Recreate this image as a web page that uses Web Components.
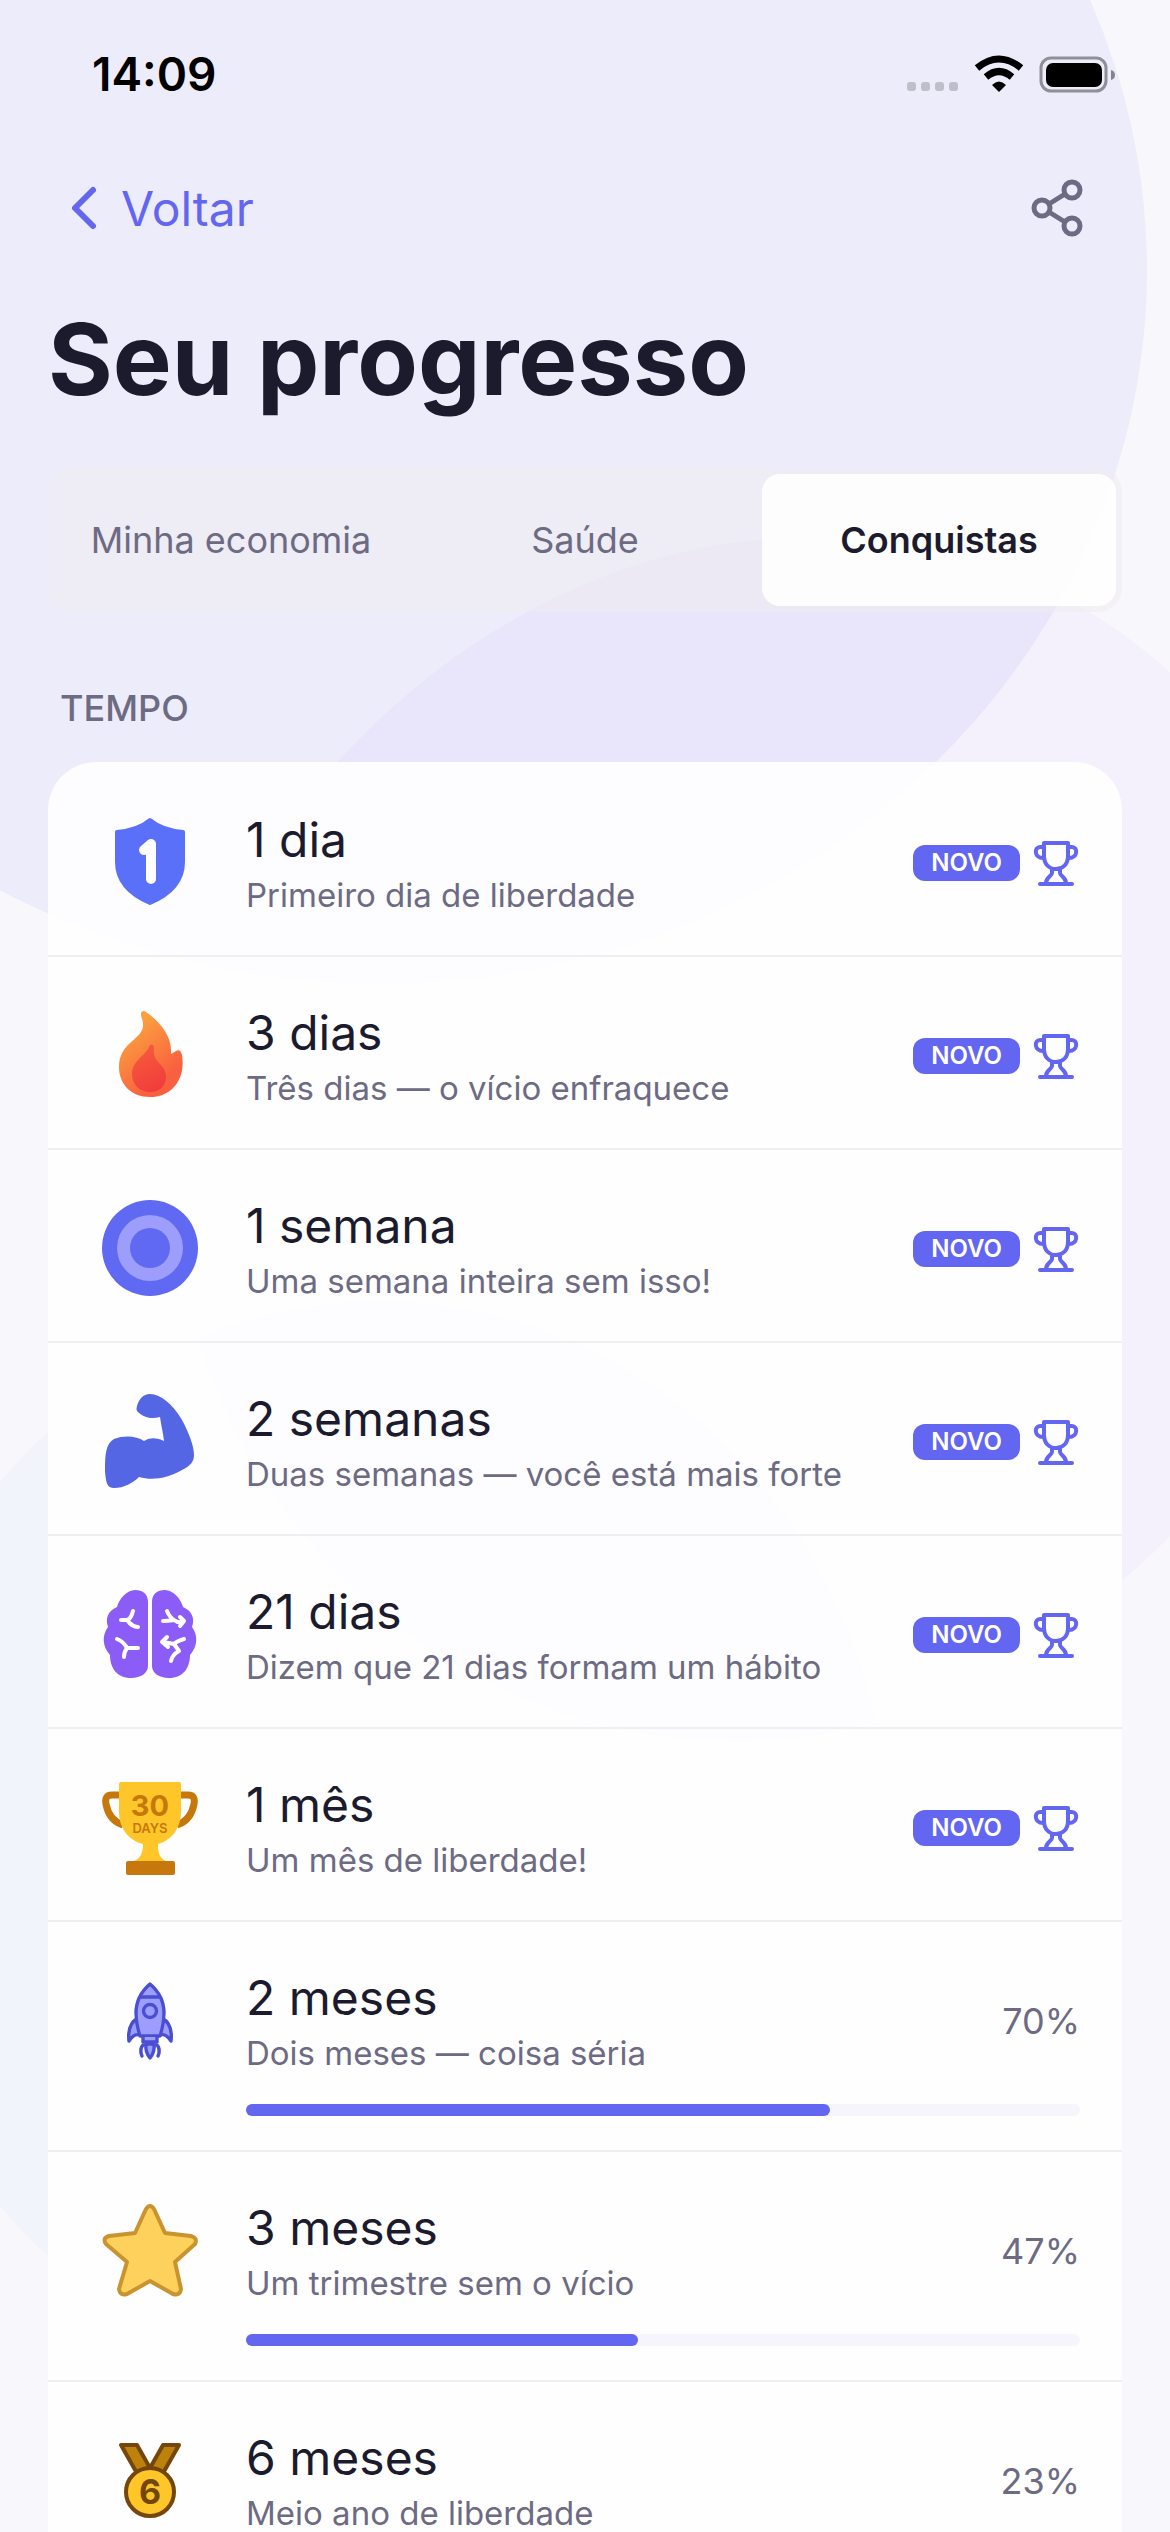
<!DOCTYPE html>
<html lang="pt">
<head>
<meta charset="utf-8">
<meta name="viewport" content="width=device-width, initial-scale=1">
<title>Seu progresso</title>
<style>
    html {
        overflow-x: hidden;
    }

    body {
        margin: 0;
        font-family: Inter, 'Open Sans', sans-serif;
        color: #1c1b2e;
        background: #f8f7fc;
        --accent: #6366f1;
        --muted: #6d6b83;
        --line: #efeff1;
    }
</style>
</head>
<body>
<progress-page></progress-page>

<script>
const icons = {
    shield: `<path fill="#5a70f8" stroke="#5a70f8" stroke-width="4" stroke-linejoin="round" d="M48 6Q36 16 15 18V48C15 67 27 80 48 89C69 80 81 67 81 48V18Q60 16 48 6Z"/>
        <path fill="none" stroke="#fff" stroke-width="10" stroke-linecap="round" stroke-linejoin="round" d="M42 36L49 30V65"/>`,
    flame: `<defs>
            <linearGradient id="fire" x1="0.2" y1="0" x2="0.8" y2="1"><stop offset="0.15" stop-color="#fb9f3f"/><stop offset="0.8" stop-color="#f9603f"/></linearGradient>
            <linearGradient id="core" x1="0.3" y1="0" x2="0.7" y2="1"><stop offset="0" stop-color="#f75c3c"/><stop offset="1" stop-color="#f03c3c"/></linearGradient>
        </defs>
        <path fill="url(#fire)" d="M39 7C39 4 42 3 44 5C57 14 69 28 69 43V47L74 44C77 42 79 44 80 48C84 73 69 90 48 90C29 90 17 77 17 60C17 34 42 33 41 17C41 13 39 11 39 7Z"/>
        <path fill="url(#core)" d="M47 40C48 36 52 37 52 41C50 57 64 56 64 70C64 79 57 85 48 85C37 85 30 77 30 67C30 54 43 49 47 40Z"/>`,
    target: `<circle cx="48" cy="48" r="48" fill="#6069f2"/><circle cx="48" cy="48" r="33" fill="#9c9dfc"/><circle cx="48" cy="48" r="20" fill="#6069f2"/>`,
    arm: `<path fill="#5566e5" d="M35 13C37 6 41 1 48 1C58 1 71 11 80 27C87 40 92 53 92 62C92 69 88 73 80 77C66 85 51 88 37 84C31 90 22 95 12 95C5 95 4 90 3 78C3 60 4 51 12 46C22 42 35 43 42 48C49 44 55 45 62 48C61 39 59 32 58 24C47 27 40 23 35 18Q34 16 35 13Z"/>`,
    brain: `<path fill="#8b5cf6" d="M46 16C46 8 41 4 33 4C25 4 17 13 15 21C6 25 3 32 6 41C0 49 0 60 8 69C8 82 15 92 29 92C39 92 46 87 46 80ZM50 16C50 8 55 4 63 4C71 4 79 13 81 21C90 25 93 32 90 41C96 49 96 60 88 69C88 82 81 92 67 92C57 92 50 87 50 80Z"/>
        <g fill="none" stroke="#fff" stroke-width="4" stroke-linecap="round" stroke-linejoin="round">
            <path d="M31 25Q29 33 25 34H19M25 34Q30 41 36 41M15 53Q22 56 25 62H36M25 62Q22 66 22 71"/>
            <path d="M65 25Q68 32 72 34Q66 35 61 35M72 34Q77 38 82 35M78 31L82 35L78 40M82 53Q75 55 72 58L61 56M65 51L60 56L66 61M72 58L77 65Q70 69 69 75"/>
        </g>`,
    cup: `<path fill="none" stroke="#c6780c" stroke-width="7" d="M20 16H10C4 16 3 20 4 25C6 36 12 43 21 46M76 16H86C92 16 93 20 92 25C90 36 84 43 75 46"/>
        <path fill="#fec629" d="M19 3H77Q79 3 79 5V32C79 49 70 61 56 65C56 73 57 79 64 82H32C39 79 41 73 41 65C26 61 17 49 17 32V5Q17 3 19 3Z"/>
        <rect x="24" y="82" width="49" height="14" rx="2" fill="#c6780c"/>
        <text x="48" y="37" text-anchor="middle" fill="#c6780c" font-size="29" font-weight="700">30</text>
        <text x="48" y="54" text-anchor="middle" fill="#c6780c" font-size="13" font-weight="600">DAYS</text>`,
    rocket: `<g fill="#9c9dfc" stroke="#4a4fd2" stroke-width="3.4" stroke-linejoin="round" stroke-linecap="round">
            <path d="M36 46Q25 52 27 69Q32 61 38 63M60 46Q71 52 69 69Q64 61 58 63"/>
            <path d="M48 12Q34 24 34 41Q34 52 38 64H58Q62 52 62 41Q62 24 48 12Z"/>
            <path d="M39 25H57M41 65V70H55V65"/><path d="M44 72Q43 80 48 86Q53 80 52 72ZM41 73Q37 77 40 84M55 73Q59 77 56 84"/>
            <circle cx="48" cy="39" r="6.5"/>
        </g>`,
    star: `<path fill="#fdd15b" stroke="#c99430" stroke-width="4" stroke-linejoin="round" d="M44 7Q48 1 52 7L63 31L89 34Q96 36 93 42L73 60L79 87Q78 94 71 92L48 79L25 92Q18 94 17 87L25 60L4 42Q0 36 7 34L33 31Z"/>`,
    medal: `<g stroke="#744608" stroke-width="4" stroke-linejoin="round">
            <path fill="#bd820c" d="M19 13H35L48 36L61 13H77L60 43H36Z"/>
            <circle cx="48" cy="60" r="24" fill="#fec629"/>
        </g>
        <text x="48" y="72" text-anchor="middle" fill="#744608" font-size="34" font-weight="700">6</text>`
};

class PageBackdrop extends HTMLElement {
    constructor() {
        super();

        this.attachShadow({ mode: 'open' });
        this.shadowRoot.innerHTML = `
            <style>
                :host {
                    position: absolute;
                    inset: 0;
                    z-index: -1;
                    overflow: hidden;
                }

                svg {
                    display: block;
                    width: 100%;
                    height: auto;
                }
            </style>
            <svg viewBox="0 0 1170 2532" aria-hidden="true">
                <ellipse cx="380" cy="270" rx="767" ry="714" fill="#6366f1" fill-opacity="0.07"/>
                <path d="M803 538C970 538 1090 595 1180 682V1526C1060 1650 900 1742 740 1742C420 1742 170 1480 170 1160C170 850 480 538 803 538Z" fill="#8b5cf6" fill-opacity="0.035"/>
                <ellipse cx="380" cy="1844" rx="510" ry="543" fill="#3ba9e8" fill-opacity="0.03"/>
            </svg>
        `;
    }
}

class StatusBar extends HTMLElement {
    constructor() {
        super();

        this.attachShadow({ mode: 'open' });
        this.shadowRoot.innerHTML = `
            <style>
                :host {
                    display: flex;
                    justify-content: space-between;
                    align-items: center;
                    height: 148px;
                    padding: 0 54px 0 92px;
                    color: #000;
                    font-size: 46px;
                    font-weight: 600;
                }
            </style>
            <span>14:09</span>
            <svg width="210" height="40" viewBox="0 0 210 40" aria-hidden="true">
                <g fill="#bfbec9"><rect x="1" y="28" width="9" height="9" rx="3"/><rect x="15" y="28" width="9" height="9" rx="3"/><rect x="29" y="28" width="9" height="9" rx="3"/><rect x="43" y="28" width="9" height="9" rx="3"/></g>
                <g fill="none" stroke="#000" stroke-width="7"><path d="M71 14Q93-4 115 14"/><path d="M80 23Q93 12 106 23"/></g>
                <path d="M86 31Q93 24 100 31L93 38Z"/>
                <rect x="135" y="4" width="65" height="33" rx="10" fill="none" stroke="#908f98" stroke-width="3"/>
                <rect x="140" y="9" width="56" height="24" rx="7"/>
                <path fill="#85848c" d="M205 16Q209 17 209 21Q209 25 205 26Z"/>
            </svg>
        `;
    }
}

class NavBar extends HTMLElement {
    constructor() {
        super();

        this.attachShadow({ mode: 'open' });
        this.shadowRoot.innerHTML = `
            <style>
                :host {
                    display: flex;
                    justify-content: space-between;
                    align-items: center;
                    height: 120px;
                    padding: 0 84px 0 68px;
                }

                a {
                    display: flex;
                    align-items: center;
                    gap: 21px;
                    color: var(--accent);
                    font-size: 48px;
                    text-decoration: none;
                }

                button {
                    display: flex;
                    padding: 0;
                    border: none;
                    background: none;
                    color: var(--muted);
                    cursor: pointer;
                }

                svg {
                    fill: none;
                    stroke: currentColor;
                    stroke-width: 5;
                }

                a svg {
                    stroke-width: 6;
                }
            </style>
            <a href="#"><svg width="32" height="48" viewBox="0 0 32 48" stroke-linecap="round" stroke-linejoin="round"><path d="M25 6L7 24L25 42"/></svg>Voltar</a>
            <button type="button" aria-label="Compartilhar">
                <svg width="56" height="60" viewBox="0 0 56 60"><circle cx="42" cy="12" r="8"/><circle cx="12" cy="30" r="8"/><circle cx="42" cy="48" r="8"/><path d="M19 26L35 16M19 34L35 44"/></svg>
            </button>
        `;
    }
}

class TabBar extends HTMLElement {
    constructor() {
        super();

        this.attachShadow({ mode: 'open' });
        this.shadowRoot.innerHTML = `
            <style>
                :host {
                    display: flex;
                    height: 132px;
                    padding: 6px;
                    border-radius: 24px;
                    background: rgba(240, 236, 240, 0.5);
                }

                button {
                    flex: 1;
                    padding: 0;
                    border: none;
                    border-radius: 18px;
                    background: none;
                    color: var(--muted);
                    font: 400 36px Inter, 'Open Sans', sans-serif;
                    cursor: pointer;
                }

                button[aria-selected="true"] {
                    background: rgba(255, 255, 255, 0.9);
                    color: #1c1b2e;
                    font-weight: 600;
                }
            </style>
            <button type="button" role="tab" aria-selected="false">Minha economia</button>
            <button type="button" role="tab" aria-selected="false">Saúde</button>
            <button type="button" role="tab" aria-selected="true">Conquistas</button>
        `;
    }

    connectedCallback() {
        this.setAttribute('role', 'tablist');
    }
}

class NewBadge extends HTMLElement {
    constructor() {
        super();

        this.attachShadow({ mode: 'open' });
        this.shadowRoot.innerHTML = `
            <style>
                :host {
                    display: flex;
                    align-items: center;
                    gap: 12px;
                }

                span {
                    padding: 0 18px;
                    border-radius: 12px;
                    background: var(--accent);
                    color: #fff;
                    font-size: 24px;
                    font-weight: 600;
                    line-height: 36px;
                }
            </style>
            <span>NOVO</span>
            <svg width="48" height="48" viewBox="0 0 48 48" fill="none" stroke="#6366f1" stroke-width="4" stroke-linejoin="round" stroke-linecap="round" aria-hidden="true">
                <path d="M12 4H36V17C36 25 31 30 24 30S12 25 12 17ZM12 8H8C2 8 2 19 11 19M36 8H40C46 8 46 19 37 19M20 31V34C20 37 14 38 14 44M28 31V34C28 37 34 38 34 44M8 45H40"/>
            </svg>
        `;
    }
}

class AchievementRow extends HTMLElement {
    constructor() {
        super();

        this.attachShadow({ mode: 'open' });
    }

    connectedCallback() {
        const progress = this.getAttribute('progress');
        this.shadowRoot.innerHTML = `
            <style>
                :host {
                    box-sizing: border-box;
                    display: grid;
                    grid-template-columns: 96px 1fr;
                    column-gap: 48px;
                    min-height: 193px;
                    padding: 44px 42px 34px 54px;
                    border-bottom: 2px solid var(--line);
                }

                .icon {
                    width: 96px;
                    height: 96px;
                    margin-top: 6px;
                }

                .line {
                    display: flex;
                    justify-content: space-between;
                    align-items: center;
                }

                h3 {
                    margin: 0;
                    font-size: 48px;
                    font-weight: 400;
                    line-height: 64px;
                }

                p {
                    margin: 0;
                    color: var(--muted);
                    font-size: 33px;
                    line-height: 46px;
                }

                .percent {
                    color: var(--muted);
                    font-size: 36px;
                }

                .track {
                    height: 12px;
                    margin-top: 28px;
                    border-radius: 6px;
                    background: #f6f5fb;
                }

                .bar {
                    height: 100%;
                    border-radius: 6px;
                    background: var(--accent);
                }
            </style>
            <svg class="icon" viewBox="0 0 96 96" aria-hidden="true">${icons[this.getAttribute('icon')]}</svg>
            <div>
                <div class="line">
                    <div>
                        <h3><slot name="title"></slot></h3>
                        <p><slot></slot></p>
                    </div>
                    ${progress ? `<span class="percent">${progress}%</span>` : '<new-badge></new-badge>'}
                </div>
                ${progress ? `<div class="track"><div class="bar" style="width: ${progress}%"></div></div>` : ''}
            </div>
        `;
    }
}

const page = document.createElement('template');
page.innerHTML = `
    <style>
        :host {
            display: block;
            position: relative;
            z-index: 0;
            height: 100vh;
            overflow: hidden;
        }

        main {
            padding: 0 48px;
        }

        h1 {
            margin: 34px 0 52px;
            font-size: 99px;
            font-weight: 700;
            line-height: 114px;
        }

        h2 {
            margin: 72px 12px 30px;
            color: var(--muted);
            font-size: 36px;
            font-weight: 500;
            line-height: 48px;
        }

        .card {
            padding-top: 2px;
            border-radius: 48px;
            background: rgba(255, 255, 255, 0.88);
        }
    </style>
    <page-backdrop></page-backdrop>
    <status-bar></status-bar>
    <nav-bar></nav-bar>
    <main>
        <h1>Seu progresso</h1>
        <tab-bar></tab-bar>
        <h2>TEMPO</h2>
        <div class="card">
            <achievement-row icon="shield"><span slot="title">1 dia</span>Primeiro dia de liberdade</achievement-row>
            <achievement-row icon="flame"><span slot="title">3 dias</span>Três dias — o vício enfraquece</achievement-row>
            <achievement-row icon="target"><span slot="title">1 semana</span>Uma semana inteira sem isso!</achievement-row>
            <achievement-row icon="arm"><span slot="title">2 semanas</span>Duas semanas — você está mais forte</achievement-row>
            <achievement-row icon="brain"><span slot="title">21 dias</span>Dizem que 21 dias formam um hábito</achievement-row>
            <achievement-row icon="cup"><span slot="title">1 mês</span>Um mês de liberdade!</achievement-row>
            <achievement-row icon="rocket" progress="70"><span slot="title">2 meses</span>Dois meses — coisa séria</achievement-row>
            <achievement-row icon="star" progress="47"><span slot="title">3 meses</span>Um trimestre sem o vício</achievement-row>
            <achievement-row icon="medal" progress="23"><span slot="title">6 meses</span>Meio ano de liberdade</achievement-row>
        </div>
    </main>
`;

class ProgressPage extends HTMLElement {
    constructor() {
        super();

        this.attachShadow({ mode: 'open' });
        this.shadowRoot.appendChild(page.content.cloneNode(true));
    }
}

window.customElements.define('page-backdrop', PageBackdrop);
window.customElements.define('status-bar', StatusBar);
window.customElements.define('nav-bar', NavBar);
window.customElements.define('tab-bar', TabBar);
window.customElements.define('new-badge', NewBadge);
window.customElements.define('achievement-row', AchievementRow);
window.customElements.define('progress-page', ProgressPage);
</script>
</body>
</html>
